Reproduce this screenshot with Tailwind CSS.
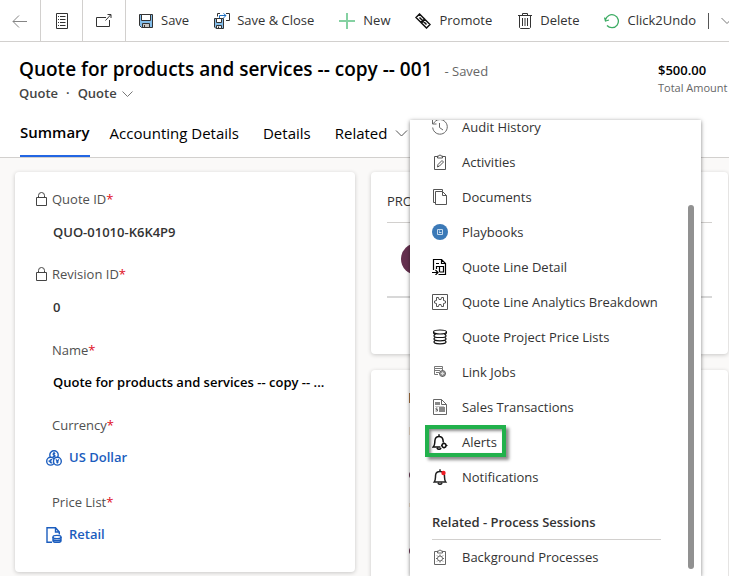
<!DOCTYPE html>
<html lang="en">
<head>
<meta charset="utf-8">
<meta name="viewport" content="width=device-width, initial-scale=1">
<title>Quote</title>
<script src="https://cdn.jsdelivr.net/npm/@tailwindcss/browser@4"></script>
</head>
<body class="font-['Open_Sans','Noto_Sans',sans-serif] text-[13px] text-[#333] bg-[#faf9f8]">
<div class="relative flex h-screen flex-col overflow-hidden">

  <!-- Command bar -->
  <nav class="flex h-[42px] shrink-0 overflow-hidden border-b border-[#d2d0ce] bg-white whitespace-nowrap">
    <button aria-label="Back" class="flex w-[41px] shrink-0 items-center justify-center border-r border-[#d2d0ce]">
      <svg class="size-4" viewBox="0 0 16 16" fill="none" stroke="#858585"><path d="M1 8.5h14M7 2.5l-6 6 6 6"/></svg>
    </button>
    <button aria-label="Form view" class="flex w-[42px] shrink-0 items-center justify-center border-r border-[#d2d0ce]">
      <svg class="size-4" viewBox="0 0 16 16" fill="none" stroke="#333"><path d="M2.5.5h11v15h-11zM6 3.500h5.500M6 6.500h5.500M6 9.500h5.500M6 12.500h5.500M4 3.500h1M4 6.500h1M4 9.500h1M4 12.500h1"/></svg>
    </button>
    <button aria-label="Open in new window" class="flex w-[43px] shrink-0 items-center justify-center border-r border-[#d2d0ce]">
      <svg class="size-4" viewBox="0 0 16 16" fill="none" stroke="#333"><path d="M10 4.500H.5v9h13V7M9.500 7.500l5-5.500M11.500 1.500h3.500V5"/></svg>
    </button>
    <div class="flex items-center gap-[25px] pl-3">
      <button class="flex items-center gap-[7px]">
        <svg class="size-4" viewBox="0 0 16 16" fill="none" stroke="#333"><path fill="#83bdea" d="M1.500 1.500h13v13h-11l-2-2z"/><path fill="#fff" d="M3.500 1.500h9v6h-9z"/><path fill="#c8c6c4" d="M4.500 10.500h7v4h-7z"/><path d="M6.500 12v2.500"/></svg>Save
      </button>
      <button class="flex items-center gap-[7px]">
        <svg class="size-4" viewBox="0 0 16 16" fill="none" stroke="#333"><path d="M3.500 3.500v-3H6M12 .5h3.500v7H12"/><path stroke="#1b6ec2" d="M5.500 5V2.500H12M9.500.5l2.500 2-2.500 2.500"/><path fill="#83bdea" d="M.5 5.500h9v10H2l-1.500-1.500z"/><path fill="#fff" d="M2.500 5.500h5v4h-5z"/><path fill="#eee" d="M2.500 12.500h5v3h-5z"/><path d="M4.500 13.500v2"/></svg>Save &amp; Close
      </button>
      <button class="flex items-center gap-2">
        <svg class="size-4" viewBox="0 0 16 16" fill="none" stroke="#85d1a2" stroke-width="2"><path d="M8 0v16M0 8h16"/></svg>New
      </button>
      <button class="flex items-center gap-2">
        <svg class="size-4" viewBox="0 0 16 16" fill="none" stroke="#111" stroke-width="1.500"><path d="M4.500 1L1 4.500 6 9.500 9.500 6zM10 6.500L6.500 10l5 5 3.500-3.500zM4.500 4.500l7 7"/></svg>Promote
      </button>
      <button class="flex items-center gap-[7px]">
        <svg class="size-4" viewBox="0 0 16 16" fill="none" stroke="#333"><path d="M1 2.500h14M5.500 2.500v-2h5v2M2.500 2.500v12l1 1h9l1-1v-12M5.500 5v8M8 5v8M10.500 5v8"/></svg>Delete
      </button>
      <button class="flex items-center gap-[7px]">
        <svg class="size-4" viewBox="0 0 16 16" fill="none" stroke="#3dac64" stroke-width="1.300"><path d="M1.500 7A6.500 6.500 0 1 1 3 12.500M.5 4.500l1 3.500 3.500-1"/></svg>Click2Undo
      </button>
    </div>
    <span class="ml-3 h-4 w-px shrink-0 self-center bg-[#555]"></span>
    <button aria-label="More commands" class="ml-3 shrink-0">
      <svg class="h-4 w-3" viewBox="0 0 12 16" fill="none" stroke="#777"><path d="M.5 5L6 10.500 11.500 5"/></svg>
    </button>
  </nav>

  <!-- Record header -->
  <header class="shrink-0 border-b border-[#d2d0ce] bg-white pt-[15px] whitespace-nowrap">
    <div class="flex justify-between pl-[19px]">
      <div>
        <h1 class="flex h-6 items-baseline gap-3 text-[19px] leading-6 font-semibold text-black">Quote for products and services -- copy -- 001 <span class="text-[13px] font-normal text-[#666]">- Saved</span></h1>
        <div class="mt-[3px] flex h-5 items-center gap-2 font-semibold text-[#444]">
          <span>Quote</span><span>·</span>
          <button class="flex items-center gap-[5px]">Quote
            <svg class="h-3 w-[11px]" viewBox="0 0 11 12" fill="none" stroke="#777"><path d="M.5 3.500l5 5 5-5"/></svg>
          </button>
        </div>
      </div>
      <div class="w-[71px] shrink-0 pt-[3px]">
        <div class="h-5 leading-5 font-semibold text-black">$500.00</div>
        <div class="h-4 text-[11px] leading-4 text-[#666]">Total Amount</div>
      </div>
    </div>
    <div role="tablist" class="mt-[5px] flex gap-6 pl-5 text-[15px] text-black">
      <button role="tab" aria-selected="true" class="-mr-1 h-12 border-b-2 border-[#2266e3] font-semibold">Summary</button>
      <button role="tab" class="h-12">Accounting Details</button>
      <button role="tab" class="h-12">Details</button>
      <button role="tab" class="flex h-12 items-center gap-2">Related
        <svg class="h-3 w-[13px]" viewBox="0 0 13 12" fill="none" stroke="#555"><path d="M1 3.500L6.500 9 12 3.500"/></svg>
      </button>
    </div>
  </header>

  <!-- Form sections -->
  <main class="grid min-h-0 flex-1 grid-cols-[340fr_357fr] items-start gap-4 pt-[14px] pr-px pl-[15px]">
    <section class="flex flex-col gap-[23px] rounded bg-white pt-[18px] pb-[26px] pl-5 shadow-[0_1px_4px_rgba(0,0,0,0.2)]">
      <div class="flex flex-col gap-3">
        <label for="quote-id" class="flex h-5 items-center gap-1 text-[#505050]">
          <svg class="h-4 w-[13px]" viewBox="0 0 13 16" fill="none" stroke="#444"><path d="M1.500 5.500h10v8h-10zM3.500 5.500V3.500a3 3 0 0 1 6 0v2"/></svg>
          <span>Quote ID<span class="text-[#e00b1c]">*</span></span>
        </label>
        <input id="quote-id" readonly value="QUO-01010-K6K4P9" class="ml-[18px] h-5 w-[280px] font-semibold text-[#333]">
      </div>
      <div class="flex flex-col gap-3">
        <label for="revision-id" class="flex h-5 items-center gap-1 text-[#505050]">
          <svg class="h-4 w-[13px]" viewBox="0 0 13 16" fill="none" stroke="#444"><path d="M1.500 5.500h10v8h-10zM3.500 5.500V3.500a3 3 0 0 1 6 0v2"/></svg>
          <span>Revision ID<span class="text-[#e00b1c]">*</span></span>
        </label>
        <input id="revision-id" readonly value="0" class="ml-[18px] h-5 w-[280px] font-semibold text-[#333]">
      </div>
      <div class="flex flex-col gap-3">
        <label for="name" class="ml-[17px] h-5 leading-5 text-[#505050]">Name<span class="text-[#e00b1c]">*</span></label>
        <input id="name" value="Quote for products and services -- copy -- ..." class="ml-[18px] h-5 w-[290px] font-semibold text-black">
      </div>
      <div class="flex flex-col gap-3">
        <div class="ml-[17px] h-5 leading-5 text-[#505050]">Currency<span class="text-[#e00b1c]">*</span></div>
        <a href="#" class="ml-[11px] flex h-[22px] items-center gap-[7px] font-semibold text-[#1b5dbe]">
          <svg class="size-4" viewBox="0 0 16 16" fill="none" stroke="currentColor" stroke-width="1.400"><circle cx="8" cy="5" r="4.200"/><circle cx="4.600" cy="11.200" r="3.900" fill="#fff"/><circle cx="11.400" cy="11.200" r="3.900" fill="#fff"/><path stroke-width="1.200" d="M9.300 3.500C7 2.500 6.300 4.500 8 5s1.500 2.300-1.300 1.400M8 2v6M6.300 9.800c-2.800-1.300-3.600 4 0 2.800M2.500 11.200h3M9.900 9.300l1.500 1.900 1.500-1.900M11.400 11v2.500M10 12h2.800"/></svg>US Dollar</a>
      </div>
      <div class="flex flex-col gap-3">
        <div class="ml-[17px] h-5 leading-5 text-[#505050]">Price List<span class="text-[#e00b1c]">*</span></div>
        <a href="#" class="ml-[11px] flex h-[22px] items-center gap-[7px] font-semibold text-[#1b5dbe]">
          <svg class="size-4" viewBox="0 0 16 16" fill="none" stroke="currentColor" stroke-width="1.400"><path d="M6 15.300H1V.7h8.500L13.300 5v2.500M9.500.7V5h3.800"/><ellipse cx="11" cy="10" rx="4" ry="1.600"/><path d="M7 10v4c0 2 8 2 8 0v-4M7 12c0 2 8 2 8 0M7 13.800c0 2 8 2 8 0"/></svg>Retail</a>
      </div>
    </section>

    <div class="flex flex-col gap-4">
      <section class="rounded bg-white px-4 pt-[18px] pb-[56px] shadow-[0_1px_4px_rgba(0,0,0,0.2)]">
        <h2 class="h-[33px] border-b border-[#d2d0ce] leading-[22px]">PRO</h2>
        <div class="h-[75px] border-b-2 border-[#d8d8d8] pt-5 pl-[14px]">
          <div class="size-8 rounded-full bg-[#65304f]"></div>
        </div>
      </section>
      <section class="flex h-[300px] flex-col rounded bg-white pt-[23px] pl-[38px] shadow-[0_1px_4px_rgba(0,0,0,0.2)]">
        <span class="h-[10px] w-1 bg-[#a9713f]"></span>
        <span class="mt-6 h-2 w-1 bg-[#f3e1cf]"></span>
        <span class="mt-9 h-2 w-1 rounded-l bg-[#65304f]"></span>
        <span class="mt-6 h-1 w-1 bg-[#f3e1cf]"></span>
        <span class="mt-10 h-2 w-1 rounded-l bg-[#65304f]"></span>
      </section>
    </div>
  </main>

  <!-- Related menu, scrolled part way down -->
  <div class="absolute top-[120px] bottom-0 left-[410px] w-[291px] overflow-hidden bg-white shadow-[0_1px_4px_rgba(0,0,0,0.5)]">
    <div role="menu" class="-mt-[10px] flex flex-col pl-[22px] [&_svg]:mb-[2px]">
      <button role="menuitem" class="flex h-[35px] items-center gap-[14px]">
        <svg class="size-4" viewBox="0 0 16 16" fill="none" stroke="#666"><path d="M1.500 4.500A7.300 7.300 0 1 1 .7 8.500M.5 1v4h4M7.500 4v4.500L11 11"/></svg>Audit History
      </button>
      <button role="menuitem" class="flex h-[35px] items-center gap-[14px]">
        <svg class="size-4" viewBox="0 0 16 16" fill="none" stroke="#555"><path d="M5 2.500H2.500v13h11v-13H11M5.500 4V2h1.500a1 1 0 0 1 2 0h1.500v2z"/><path d="M5.500 13l.5-2.500 4-4 1.500 1.500-4 4z"/></svg>Activities
      </button>
      <button role="menuitem" class="flex h-[35px] items-center gap-[14px]">
        <svg class="size-4" viewBox="0 0 16 16" fill="none" stroke="#555"><path d="M3.500 13.500h-2v-13h9v2M3.500 2.500h7l4 4v9h-11zM10.500 2.500v4h4"/></svg>Documents
      </button>
      <button role="menuitem" class="flex h-[35px] items-center gap-[14px]">
        <svg class="size-4" viewBox="0 0 16 16" fill="none"><circle cx="8" cy="8" r="8" fill="#3b79b7"/><path stroke="#c5daee" d="M5.500 5.500h5v5h-5zM7 8.500h2.500M7 7h1"/></svg>Playbooks
      </button>
      <button role="menuitem" class="flex h-[35px] items-center gap-[14px]">
        <svg class="size-4" viewBox="0 0 16 16" fill="none" stroke="#000" stroke-width="1.200"><path d="M1.500 11V.5h8l4 4v11h-7M9.500.5v4h4M4 4.500h3M4.500 10V7.500h7v5.500h-4M7.500 7.500V13M0 13.500h5.500M3.500 11l2.500 2.500L3.500 16"/></svg>Quote Line Detail
      </button>
      <button role="menuitem" class="flex h-[35px] items-center gap-[14px]">
        <svg class="size-4" viewBox="0 0 16 16" fill="none" stroke="#555"><path d="M.5.5h15v15H.5z"/><path d="M4.500 3.500h2l.5 2h2l.5-2h2v3l2 .5v2l-2 .5v3h-2L9 10.500H7l-.5 2h-2v-3l-2-.5V7l2-.5z"/></svg>Quote Line Analytics Breakdown
      </button>
      <button role="menuitem" class="flex h-[35px] items-center gap-[14px]">
        <svg class="size-4" viewBox="0 0 16 16" fill="none" stroke="#111" stroke-width="1.200"><ellipse cx="8" cy="3" rx="6.500" ry="2"/><path d="M1.500 3c0 1 .5 2 1.500 2.500-3 2.500 1 3 5 3s8-.5 5-3c1-.5 1.500-1.500 1.500-2.500M3 8.500c-3 2.500 1 3.300 5 3.300s8-.8 5-3.300M3 11.500c-3 2.500 1 3.300 5 3.300s8-.8 5-3.300"/></svg>Quote Project Price Lists
      </button>
      <button role="menuitem" class="flex h-[35px] items-center gap-[14px]">
        <svg class="size-4" viewBox="0 0 16 16" fill="none" stroke="#777"><path d="M2.500 2.500h8v2h-8zM2.500 6.500H8M2.500 4.500v6H6M4 8.500h3M10.500 4.500V6"/><circle cx="10.500" cy="9.500" r="3" fill="#999" stroke="#666"/><path stroke="#ddd" d="M9 9.500h3M10.500 8v3"/><path stroke="#666" d="M7 9.500h1M13 9.500h1M10.500 6v1M10.500 12v1M8 7l1 1M12 11l1 1"/></svg>Link Jobs
      </button>
      <button role="menuitem" class="flex h-[35px] items-center gap-[14px]">
        <svg class="size-4" viewBox="0 0 16 16" fill="none" stroke="#666"><path d="M1.500.5h8l5 5v10h-13zM9.500.5v5h5"/><path fill="#888" stroke="none" d="M3 3h5v3H3zM7 8h6v5H7zM3 7h9v.5H3z"/><path d="M5.500 9H4v1.500h1.500V12H3.500"/></svg>Sales Transactions
      </button>
      <button role="menuitem" class="relative flex h-[35px] items-center gap-[14px]">
        <span class="pointer-events-none absolute top-0 -left-[7px] h-[32px] w-[81px] border-4 border-[#22b14c] shadow-[3px_3px_3px_rgba(0,0,0,0.45),inset_2px_2px_3px_rgba(0,0,0,0.45)]"></span>
        <svg class="size-4" viewBox="0 0 16 16" fill="none" stroke="#111" stroke-width="1.500"><path d="M8.500 13H1.200C3.300 11 2.500 9 3 6c.4-2.200 1.700-3.500 4-3.500S10.600 3.800 11 6l.3 2.500M7 2.500V.3M5 14c.5 1.700 3.500 1.700 4 0"/><circle cx="12" cy="11.500" r="2"/><path stroke-width="1" d="M12 8.500V10M12 13v1.500M9 11.500h1M14 11.500h1.500"/></svg>Alerts
      </button>
      <button role="menuitem" class="flex h-[35px] items-center gap-[14px]">
        <svg class="size-4" viewBox="0 0 16 16" fill="none" stroke="#222" stroke-width="1.500"><path d="M2.300 13c1.500-2 1-4 1.300-7 .3-2.200 1.800-3.500 4.400-3.500s4.100 1.300 4.400 3.500c.3 3-.2 5 1.300 7zM8 2.500V.3M6 14c.5 1.700 3.500 1.700 4 0"/><circle cx="11.500" cy="4" r="2.200" fill="#ed1c24" stroke="none"/></svg>Notifications
      </button>
      <h3 class="mt-[17px] mr-10 flex h-7 items-start border-b border-[#d2d0ce] leading-5 font-semibold">Related - Process Sessions</h3>
      <button role="menuitem" class="flex h-[35px] items-center gap-[14px]">
        <svg class="size-4" viewBox="0 0 16 16" fill="none" stroke="#666"><path d="M5 2.500H2.500v13h11v-13H11M5.500 4V2h1.500a1 1 0 0 1 2 0h1.500v2z"/><circle cx="8" cy="9.500" r="2.500"/><path d="M8 5.500V7M8 12v1.500M4 9.500h1.500M10.500 9.500H12M5 6.500l1 1M10 11.500l1 1M11 6.500l-1 1M6 11.500l-1 1"/></svg>Background Processes
      </button>
    </div>
    <div class="absolute top-[85px] right-[7px] bottom-[7px] w-[6px] rounded-full bg-[#919191]"></div>
  </div>
</div>
</body>
</html>
